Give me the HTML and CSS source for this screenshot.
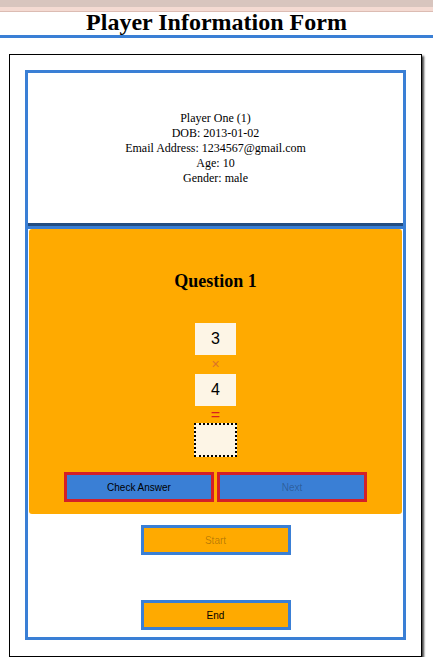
FILE: index.html
```html
<!DOCTYPE html>
<html>
<head>
<meta charset="utf-8">
<title>Player Information Form</title>
<link rel="stylesheet" href="styles.css">
</head>
<body>
<div class="topband"></div>
<header class="header">
  <h1 class="title">Player Information Form</h1>
</header>
<main class="frame">
  <div class="container">
    <section class="info">
      <div>Player One (1)</div>
      <div>DOB: 2013-01-02</div>
      <div>Email Address: 1234567@gmail.com</div>
      <div>Age: 10</div>
      <div>Gender: male</div>
    </section>
    <section class="quiz">
      <h3 class="question">Question 1</h3>
      <div class="num">3</div>
      <div class="op times">×</div>
      <div class="num">4</div>
      <div class="op equals">=</div>
      <div class="answer"></div>
      <div class="quiz-buttons">
        <button class="qbtn">Check Answer</button>
        <button class="qbtn" disabled>Next</button>
      </div>
    </section>
    <div class="controls">
      <button class="cbtn" disabled>Start</button>
      <button class="cbtn end">End</button>
    </div>
  </div>
</main>
</body>
</html>
```
FILE: styles.css
```css
html, body {
  margin: 0;
  padding: 0;
  background: #ffffff;
}
body {
  font-family: "Liberation Serif", "Times New Roman", serif;
  color: #000;
}
.topband {
  height: 7px;
  background: #d8c5be;
  border-bottom: 4px solid #f4dad2;
  box-shadow: 0 1px 0 #dcbcb3;
}
.header {
  padding-top: 1px;
  padding-bottom: 3px;
  border-bottom: 3px solid #3a7fd5;
}
.title {
  margin: 0;
  font-size: 24px;
  line-height: 20px;
  font-weight: bold;
  text-align: center;
}
.frame {
  margin: 16px 0 0 9px;
  width: 413px;
  box-sizing: border-box;
  border: 1px solid #000;
  padding: 15px 15px 16px 15px;
  box-shadow: 2px 2px 2px #444;
}
.container {
  border: 3px solid #3a7fd5;
  display: flex;
  flex-direction: column;
  align-items: stretch;
  padding-bottom: 7px;
}
.info {
  height: 156px;
  box-sizing: border-box;
  padding-top: 38px;
  font-size: 12px;
  line-height: 15px;
  text-align: center;
  border-bottom: 6px groove #3a7fd5;
}
.quiz {
  margin: 0 1px;
  height: 285px;
  box-sizing: border-box;
  background: #ffaa00;
  border-radius: 3px;
  padding-top: 41px;
  display: flex;
  flex-direction: column;
  align-items: center;
}
.question {
  margin: 0 0 31px 0;
  font-size: 18px;
  line-height: 22px;
  font-weight: bold;
}
.num {
  width: 41px;
  height: 32px;
  background: #fdf5e6;
  font-family: "Liberation Sans", Arial, sans-serif;
  font-size: 16px;
  line-height: 32px;
  text-align: center;
}
.op {
  font-family: "Liberation Sans", Arial, sans-serif;
  text-align: center;
}
.times {
  height: 19px;
  line-height: 18px;
  font-size: 14px;
  color: #dc7428;
}
.equals {
  height: 17px;
  line-height: 17px;
  font-size: 16px;
  color: #d81f1f;
}
.answer {
  width: 43px;
  height: 34px;
  box-sizing: border-box;
  border: 2px dotted #000;
  background: #fdf5e6;
}
.quiz-buttons {
  margin-top: 15px;
  display: flex;
  gap: 3px;
}
.qbtn, .cbtn {
  width: 150px;
  height: 30px;
  box-sizing: border-box;
  margin: 0;
  padding: 0;
  font-family: "Liberation Sans", Arial, sans-serif;
  font-size: 10px;
  color: #000;
  cursor: pointer;
}
.qbtn {
  border: 3px solid #d42027;
  background: #3a7fd5;
}
.cbtn {
  border: 3px solid #3a7fd5;
  background: #ffaa00;
}
.qbtn:disabled, .cbtn:disabled {
  color: rgba(16, 16, 16, 0.3);
}
.controls {
  margin-top: 11px;
  display: flex;
  flex-direction: column;
  align-items: center;
  gap: 45px;
}
```
